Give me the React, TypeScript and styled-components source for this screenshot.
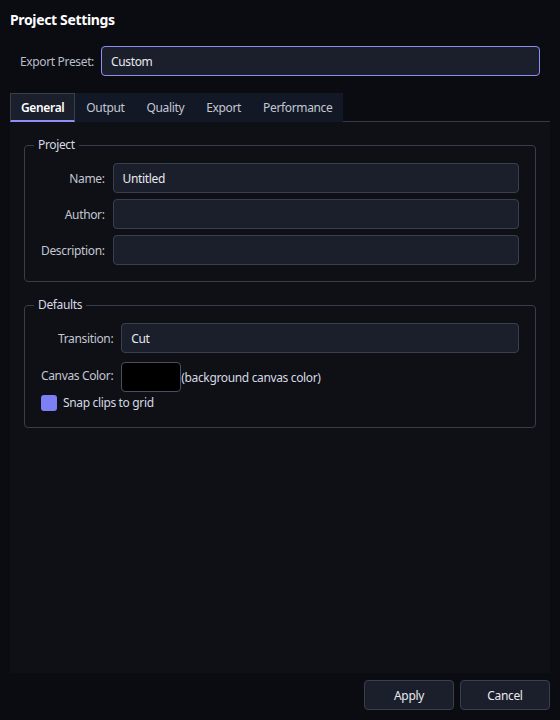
import styled, { createGlobalStyle } from "styled-components";

const GlobalStyle = createGlobalStyle`
  html, body {
    margin: 0;
    padding: 0;
    background: #0b0c11;
  }
  body {
    font-family: "Noto Sans", "Open Sans", sans-serif;
    font-size: 12px;
    letter-spacing: -0.35px;
    color: #d6d9e2;
  }
`;

const Window = styled.div`
  width: 560px;
  height: 720px;
  display: flex;
  flex-direction: column;
  background: #0b0c11;
  box-sizing: border-box;
`;

const Title = styled.div`
  font-size: 14px;
  font-weight: 700;
  color: #ffffff;
  padding: 10px 10px 0;
  line-height: 20px;
`;

const PresetRow = styled.div`
  display: flex;
  align-items: center;
  gap: 7px;
  margin: 16px 20px 0 20px;
  color: #b9bdc8;
`;

const TextInput = styled.div<{ focused?: boolean }>`
  flex: 1;
  height: 30px;
  box-sizing: border-box;
  display: flex;
  align-items: center;
  padding: 0 9px;
  background: #1b1f2b;
  border: 1px solid ${(p) => (p.focused ? "#8c8ff0" : "#3a3f4d")};
  border-radius: 4px;
  color: #e8eaf0;
`;

const TabBar = styled.div`
  display: flex;
  margin: 17px 10px 0;
  border-bottom: 1px solid #343948;
`;

const TabStrip = styled.div`
  display: flex;
  background: #121826;
  margin-bottom: -1px;
`;

const Tab = styled.div<{ active?: boolean }>`
  height: 29px;
  box-sizing: border-box;
  padding: 0 10px;
  display: flex;
  align-items: center;
  color: ${(p) => (p.active ? "#ffffff" : "#c3c7d2")};
  background: ${(p) => (p.active ? "#1a1f2b" : "transparent")};
  border: 1px solid ${(p) => (p.active ? "#3a3f4d" : "transparent")};
  border-bottom: 2px solid ${(p) => (p.active ? "#8e8ff5" : "transparent")};
  font-weight: ${(p) => (p.active ? 600 : 400)};
`;

const Panel = styled.div`
  flex: 1;
  margin: 0 10px;
  background: #0e1016;
  padding: 15px 14px 0;
  display: flex;
  flex-direction: column;
  gap: 15px;
`;

const Group = styled.fieldset`
  margin: 0;
  border: 1px solid #383d4b;
  border-radius: 4px;
  padding: 10px 16px 16px;
  min-width: 0;
`;

const Legend = styled.legend`
  padding: 0 4px;
  margin-left: -7px;
  color: #d6d9e2;
  line-height: 16px;
`;

const FormGrid = styled.div`
  display: grid;
  grid-template-columns: auto 1fr;
  column-gap: 8px;
  row-gap: 6px;
  align-items: center;
`;

const Label = styled.div`
  text-align: right;
  color: #c3c7d2;
`;

const ColorCell = styled.div`
  display: flex;
  align-items: center;
  margin-top: 3px;
  color: #d6d9e2;
`;

const Swatch = styled.div<{ color: string }>`
  width: 60px;
  height: 30px;
  box-sizing: border-box;
  background: ${(p) => p.color};
  border: 1px solid #4a4f5c;
  border-radius: 4px;
`;

const CheckRow = styled.div`
  display: flex;
  align-items: center;
  gap: 6px;
  margin-top: 2px;
  color: #d6d9e2;
`;

const CheckBox = styled.div`
  width: 16px;
  height: 16px;
  border-radius: 3px;
  background: #7c7ff6;
`;

const Footer = styled.div`
  display: flex;
  justify-content: flex-end;
  gap: 6px;
  padding: 7px 10px 10px;
`;

const Button = styled.button`
  width: 90px;
  height: 30px;
  background: #1b1f2b;
  border: 1px solid #3a3f4d;
  border-radius: 4px;
  color: #e8eaf0;
  font-family: inherit;
  font-size: 12px;
  letter-spacing: -0.35px;
`;

const tabs = ["General", "Output", "Quality", "Export", "Performance"];

export default function App() {
  return (
    <>
      <GlobalStyle />
      <Window>
        <Title>Project Settings</Title>
        <PresetRow>
          <span>Export Preset:</span>
          <TextInput focused>Custom</TextInput>
        </PresetRow>
        <TabBar>
          <TabStrip>
            {tabs.map((t, i) => (
              <Tab key={t} active={i === 0}>
                {t}
              </Tab>
            ))}
          </TabStrip>
        </TabBar>
        <Panel>
          <Group>
            <Legend>Project</Legend>
            <FormGrid>
              <Label>Name:</Label>
              <TextInput>Untitled</TextInput>
              <Label>Author:</Label>
              <TextInput />
              <Label>Description:</Label>
              <TextInput />
            </FormGrid>
          </Group>
          <Group>
            <Legend>Defaults</Legend>
            <FormGrid>
              <Label>Transition:</Label>
              <TextInput>Cut</TextInput>
              <Label>Canvas Color:</Label>
              <ColorCell>
                <Swatch color="#000000" />
                (background canvas color)
              </ColorCell>
            </FormGrid>
            <CheckRow>
              <CheckBox />
              Snap clips to grid
            </CheckRow>
          </Group>
        </Panel>
        <Footer>
          <Button>Apply</Button>
          <Button>Cancel</Button>
        </Footer>
      </Window>
    </>
  );
}
